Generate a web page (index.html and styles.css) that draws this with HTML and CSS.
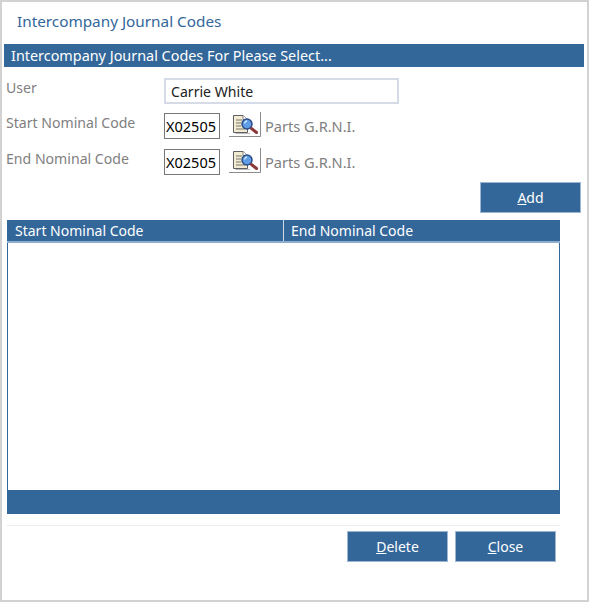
FILE: index.html
```html
<!DOCTYPE html>
<html lang="en">
<head>
<meta charset="utf-8">
<title>Intercompany Journal Codes</title>
<link rel="stylesheet" href="styles.css">
</head>
<body>
<div class="window">
  <h1 class="title">Intercompany Journal Codes</h1>
  <div class="section-bar">Intercompany Journal Codes For Please Select...</div>
  <div class="form">
    <div class="row row-user">
      <span class="label">User</span>
      <div class="user-box">Carrie White</div>
    </div>
    <div class="row row-code">
      <span class="label">Start Nominal Code</span>
      <div class="code-box">X02505</div>
      <button class="lookup" type="button" aria-label="Look up">
        <svg width="32" height="25" viewBox="0 0 32 25"><use href="#lookup-icon"/></svg>
      </button>
      <span class="hint">Parts G.R.N.I.</span>
    </div>
    <div class="row row-code">
      <span class="label">End Nominal Code</span>
      <div class="code-box">X02505</div>
      <button class="lookup" type="button" aria-label="Look up">
        <svg width="32" height="25" viewBox="0 0 32 25"><use href="#lookup-icon"/></svg>
      </button>
      <span class="hint">Parts G.R.N.I.</span>
    </div>
  </div>
  <div class="add-row"><button class="btn" type="button"><u>A</u>dd</button></div>
  <div class="grid">
    <div class="grid-head">
      <div class="col col-start">Start Nominal Code</div>
      <div class="col">End Nominal Code</div>
    </div>
    <div class="grid-body"></div>
    <div class="grid-foot"></div>
  </div>
  <div class="divider"></div>
  <div class="actions">
    <button class="btn btn-delete" type="button"><u>D</u>elete</button>
    <button class="btn" type="button"><u>C</u>lose</button>
  </div>
</div>
<svg class="defs" width="0" height="0" aria-hidden="true">
  <defs>
    <g id="lookup-icon">
      <path d="M0 24.5H31.5V0" fill="none" stroke="#8c8c8c"/>
      <path d="M21 21.5H6.5" stroke="#b9b9b9"/>
      <path d="M4.5 3.5H14L18.5 7.5V20.5H4.5Z" fill="#f3ecd2" stroke="#5f5f66"/>
      <path d="M14 3.5V7.5H18.5" fill="#fff" stroke="#7f7f7f"/>
      <path d="M7 8H13M7 11H12M7 14H12M7 17H16" stroke="#77776d" stroke-width="1.2"/>
      <circle cx="18" cy="12" r="5" fill="#5f9ee6" stroke="#2c4c88" stroke-width="1.5"/>
      <path d="M15.5 11.5A3 3 0 0 1 18 9" stroke="#dcecff" stroke-width="1.3" fill="none"/>
      <path d="M22.5 16.5L27.5 20.5" stroke="#8b3a3c" stroke-width="3" stroke-linecap="round"/>
    </g>
  </defs>
</svg>
</body>
</html>
```
FILE: styles.css
```css
* { box-sizing: border-box; }
html, body { margin: 0; padding: 0; background: #fff; }
body { font-family: "Noto Sans", "Open Sans", sans-serif; font-size: 14px; }
.window {
  width: 589px;
  height: 602px;
  border: 2px solid #d2d2d2;
  background: #fff;
  padding: 0 3px 0 2px;
  overflow: hidden;
}
.title {
  margin: 0;
  height: 42px;
  padding: 9px 0 0 13px;
  font-size: 15.3px;
  font-weight: 400;
  line-height: 21px;
  color: #33679a;
}
.section-bar {
  height: 23px;
  width: 580px;
  background: #33679a;
  color: #fff;
  font-size: 14.4px;
  line-height: 23px;
  padding-left: 7px;
}
.form { padding-top: 10px; padding-left: 2px; }
.row { display: flex; }
.label { width: 158px; color: #808080; font-size: 14.1px; line-height: 20px; flex: none; }
.row-user { height: 36px; padding-top: 1px; }
.user-box {
  width: 235px;
  height: 26px;
  border: 2px solid #d5dce8;
  padding-left: 5px;
  font-size: 14.1px;
  line-height: 23px;
  color: #222;
}
.row-code { height: 36px; }
.code-box {
  width: 56px;
  height: 26px;
  border: 1px solid #777;
  padding-left: 1px;
  font-size: 14.5px;
  line-height: 25px;
  color: #000;
  background: #fff;
  white-space: nowrap;
  overflow: hidden;
}
.lookup {
  width: 32px;
  height: 25px;
  margin: -1px 0 0 9px;
  padding: 0;
  border: 0;
  background: none;
  display: block;
}
.lookup svg { display: block; }
.hint { margin-left: 4px; color: #808080; font-size: 14.6px; line-height: 27px; }
.add-row { display: flex; justify-content: flex-end; padding-right: 3px; margin-top: -3px; height: 38px; }
.btn {
  width: 101px;
  height: 31px;
  border: 1px solid #9fb6d3;
  background: #33679a;
  color: #fff;
  font: inherit;
  font-size: 14px;
  padding: 0;
}
.grid { width: 553px; margin-left: 3px; }
.grid-head {
  display: flex;
  height: 23px;
  background: #33679a;
  border-bottom: 2px solid #8eaccb;
  color: #fff;
  font-size: 14px;
  line-height: 21px;
}
.col { padding-left: 7px; }
.col-start { width: 277px; padding-left: 8px; border-right: 1px solid #cfdbe8; }
.grid-body {
  height: 247px;
  border-left: 1px solid #33679a;
  border-right: 1px solid #33679a;
  background: #fff;
}
.grid-foot { height: 24px; background: #33679a; }
.divider { width: 553px; margin: 11px 0 0 3px; height: 1px; background: #ededed; }
.actions { display: flex; justify-content: flex-end; gap: 7px; width: 552px; margin-top: 5px; }
.defs { position: absolute; }
```
